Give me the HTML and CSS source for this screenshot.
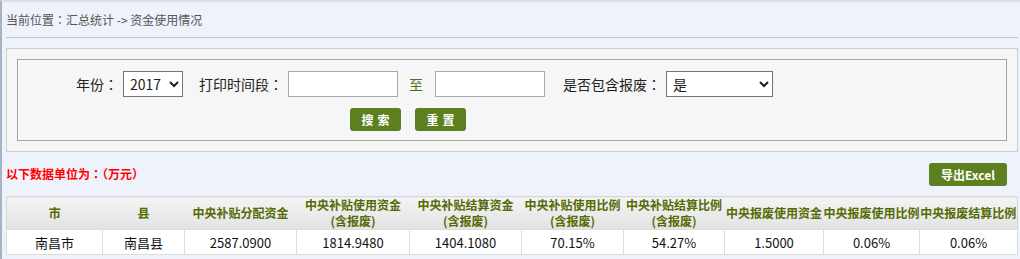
FILE: index.html
```html
<!DOCTYPE html>
<html lang="zh">
<head>
<meta charset="utf-8">
<title>资金使用情况</title>
<link rel="stylesheet" href="styles.css">
</head>
<body>
<div class="page">
  <div class="crumb">当前位置<span class="pc" lang="ja">：</span>汇总统计 -&gt; 资金使用情况</div>

  <div class="search-outer">
    <div class="search-inner">
      <div class="row">
        <span class="lbl">年份<span class="pc" lang="ja">：</span></span>
        <select class="sel sel-year"><option>2017</option></select>
        <span class="lbl lbl-gap">打印时间段<span class="pc" lang="ja">：</span></span>
        <input class="inp" type="text">
        <span class="to">至</span>
        <input class="inp inp-2" type="text">
        <span class="lbl lbl-gap2">是否包含报废<span class="pc" lang="ja">：</span></span>
        <select class="sel sel-yes"><option>是</option></select>
      </div>
      <div class="btns">
        <button class="btn">搜索</button>
        <button class="btn">重置</button>
      </div>
    </div>
  </div>

  <div class="toolbar">
    <span class="unit">以下数据单位为<span class="pc" lang="ja">：（</span>万元<span class="pc" lang="ja">）</span></span>
    <button class="btn-export">导出Excel</button>
  </div>

  <table class="grid">
    <colgroup>
      <col style="width:96px"><col style="width:82px"><col style="width:112px"><col style="width:113px"><col style="width:112px">
      <col style="width:102px"><col style="width:101px"><col style="width:99px"><col style="width:96px"><col style="width:98px">
    </colgroup>
    <thead>
      <tr>
        <th>市</th>
        <th>县</th>
        <th>中央补贴分配资金</th>
        <th>中央补贴使用资金<br>(含报废)</th>
        <th>中央补贴结算资金<br>(含报废)</th>
        <th>中央补贴使用比例<br>(含报废)</th>
        <th>中央补贴结算比例<br>(含报废)</th>
        <th>中央报废使用资金</th>
        <th>中央报废使用比例</th>
        <th>中央报废结算比例</th>
      </tr>
    </thead>
    <tbody>
      <tr>
        <td>南昌市</td>
        <td>南昌县</td>
        <td>2587.0900</td>
        <td>1814.9480</td>
        <td>1404.1080</td>
        <td>70.15%</td>
        <td>54.27%</td>
        <td>1.5000</td>
        <td>0.06%</td>
        <td>0.06%</td>
      </tr>
    </tbody>
  </table>
</div>
</body>
</html>
```

FILE: styles.css
```css
html, body {
  margin: 0;
  padding: 0;
  background: #eef2fa;
}

body {
  font-family: "Noto Sans CJK SC", "Liberation Sans", sans-serif;
  font-size: 12px;
  color: #222;
}

.pc {
  font-family: "Noto Sans CJK JP", "Noto Sans CJK TC", sans-serif;
}

.page {
  border-top: 2px solid #d9dfeb;
  border-left: 2px solid #a7b2c3;
  padding: 0 2px 7px 4px;
  min-height: 250px;
}

.crumb {
  height: 35px;
  line-height: 36px;
  color: #555;
  font-size: 12px;
  border-bottom: 1px solid #c8c8c8;
}

.search-outer {
  margin-top: 10px;
  background: #f6f6f6;
  border: 1px solid #cdcdcd;
  padding: 10px;
}

.search-inner {
  border: 1px solid #a4a4a4;
  padding: 11px 0 9px 0;
}

.row {
  display: flex;
  align-items: center;
  height: 26px;
  padding-left: 58px;
  font-size: 14px;
  color: #222;
}

.lbl {
  white-space: nowrap;
}

.lbl-gap { margin-left: 16px; }
.lbl-gap2 { margin-left: 18px; }

.sel {
  box-sizing: border-box;
  height: 26px;
  margin-left: 5px;
  font-family: "Noto Sans CJK SC", "Liberation Sans", sans-serif;
  font-size: 14px;
  color: #222;
  background: #fff;
  border: 1px solid #767676;
  border-radius: 0;
  padding: 0 2px;
}

.sel-year { width: 60px; }
.sel-yes { width: 107px; }

.inp {
  box-sizing: border-box;
  width: 110px;
  height: 26px;
  margin-left: 5px;
  background: #fff;
  border: 1px solid #a9a9a9;
  padding: 0 4px;
}

.to {
  margin-left: 11px;
  color: #4f6b1c;
}

.inp-2 { margin-left: 12px; }

.btns {
  display: flex;
  gap: 14px;
  margin-top: 11px;
  padding-left: 332px;
}

.btn, .btn-export {
  border: none;
  border-radius: 3px;
  background: #5d7f20;
  color: #fff;
  font-family: "Noto Sans CJK SC", "Liberation Sans", sans-serif;
  font-weight: bold;
  font-size: 12px;
  cursor: pointer;
  padding: 0;
}

.btn {
  width: 51px;
  height: 23px;
  letter-spacing: 4px;
  padding-left: 4px;
}

.toolbar {
  display: flex;
  justify-content: space-between;
  align-items: center;
  margin-top: 11px;
  height: 23px;
  padding-right: 11px;
}

.unit {
  color: #ff0000;
  font-weight: bold;
  font-size: 12px;
  margin-top: -3px;
}

.btn-export {
  width: 78px;
  height: 23px;
}

.grid {
  margin-top: 10px;
  width: 1011px;
  table-layout: fixed;
  border-collapse: collapse;
  border: 1px solid #d8d8d8;
  background: #fff;
}

.grid th {
  height: 32px;
  padding: 0;
  line-height: 16px;
  font-size: 12px;
  font-weight: bold;
  color: #556b05;
  background: linear-gradient(#f4f4f4, #e2e2e2);
  white-space: nowrap;
  border: none;
  border-bottom: 1px solid #dcdcdc;
}

.grid td {
  height: 24px;
  padding: 0;
  text-align: center;
  font-size: 13px;
  color: #111;
  border: 1px solid #dcdcdc;
}
```
